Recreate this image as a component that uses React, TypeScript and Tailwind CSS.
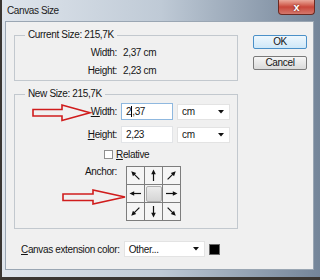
import React from "react";

function Arrow({ angle }: { angle: number }) {
  return (
    <svg width="13" height="13" viewBox="-6.5 -6.5 13 13">
      <g transform={`rotate(${angle})`}>
        <line x1="0" y1="5.5" x2="0" y2="-2" stroke="#111" strokeWidth="1.2" />
        <polygon points="0,-6 -2.3,-1.3 2.3,-1.3" fill="#111" />
      </g>
    </svg>
  );
}

function Combo({ text, w }: { text: string; w: string }) {
  return (
    <div className={`${w} h-[16px] bg-white border border-[#e3e3e3] flex items-center justify-between pl-[4px] pr-[5px]`}>
      <span>{text}</span>
      <svg width="6" height="4" viewBox="0 0 6 4">
        <polygon points="0,0 6,0 3,3.5" fill="#111" />
      </svg>
    </div>
  );
}

export default function App() {
  const angles: (number | null)[] = [315, 0, 45, 270, null, 90, 225, 180, 135];
  return (
    <div className="relative w-[320px] h-[280px] overflow-hidden bg-[#3a3632] flex font-['Liberation_Sans',Arial,sans-serif] text-[10px] tracking-[-0.35px] text-[#151515]">
      <div className="ml-[2px] mb-[3px] flex-1 flex flex-col bg-gradient-to-r from-[#dfe5ec] via-[#bfcad6] to-[#748599] pl-[3px] pr-[6px] pb-[7px]">
        {/* title bar */}
        <div className="h-[21px] flex items-start justify-between">
          <span className="pl-[2px] pt-[5px] text-[10px] leading-[11px] tracking-[-0.4px] text-[#1c1c1c]">Canvas Size</span>
          <div className="mr-[-1px] w-[37px] h-[15px] rounded-b-[4px] border border-t-0 border-[#6b2a22] bg-gradient-to-b from-[#e9a99c] via-[#c8463a] to-[#d4776c] flex items-center justify-center">
            <span className="text-white font-bold text-[11px] leading-[11px] tracking-normal [text-shadow:0_0_2px_#5a1810]">x</span>
          </div>
        </div>
        {/* content */}
        <div className="flex-1 bg-[#f0f0f0] border border-[#9aa6b3] flex flex-col">
          <div className="flex pl-[8px] pt-[7px]">
            <div className="flex flex-col w-[224px]">
              <fieldset className="border border-[#c2c8ce] pb-[0px]">
                <legend className="ml-[10px] px-[3px] leading-[12px]">Current Size: 215,7K</legend>
                <div className="pt-[3px] grid grid-cols-[102px_1fr] gap-x-[6px]">
                  <span className="h-[18px] leading-[18px] text-right">Width:</span>
                  <span className="h-[18px] leading-[18px]">2,37 cm</span>
                  <span className="h-[18px] leading-[18px] text-right">Height:</span>
                  <span className="h-[18px] leading-[18px]">2,23 cm</span>
                </div>
              </fieldset>
              <fieldset className="mt-[7px] border border-[#c2c8ce] pb-[7px]">
                <legend className="ml-[10px] px-[3px] leading-[12px]">New Size: 215,7K</legend>
                <div className="pt-[3px] flex flex-col">
                  <div className="flex items-center h-[17px]">
                    <span className="w-[102px] text-right"><span className="underline">W</span>idth:</span>
                    <div className="ml-[4px] w-[52px] h-[17px] bg-white border border-[#8fb8df] flex items-center pl-[4px]">
                      <span>2</span>
                      <span className="inline-block w-px h-[11px] bg-black" />
                      <span>,37</span>
                    </div>
                    <div className="ml-[4px]"><Combo text="cm" w="w-[53px]" /></div>
                  </div>
                  <div className="flex items-center h-[17px] mt-[6px]">
                    <span className="w-[102px] text-right"><span className="underline">H</span>eight:</span>
                    <div className="ml-[4px] w-[52px] h-[17px] bg-white border border-[#e2e4e7] flex items-center pl-[4px]">
                      <span>2,23</span>
                    </div>
                    <div className="ml-[4px]"><Combo text="cm" w="w-[53px]" /></div>
                  </div>
                  <div className="flex items-center h-[12px] mt-[5px] ml-[89px]">
                    <span className="w-[9px] h-[9px] bg-white border border-[#8f8f8f]" />
                    <span className="ml-[3px]"><span className="underline">R</span>elative</span>
                  </div>
                  <div className="flex items-start mt-[6px]">
                    <span className="w-[102px] text-right leading-[12px] pt-[0px]">Anchor:</span>
                    <div className="ml-[9px] grid grid-cols-3 gap-px bg-[#7d7d7d] p-px">
                      {angles.map((a, i) => (
                        <div key={i} className="w-[17px] h-[17px] bg-[#f5f5f5] flex items-center justify-center">
                          {a === null ? (
                            <div className="w-[16px] h-[16px] rounded-[2px] border border-[#b0b0b0] bg-gradient-to-b from-[#ececec] to-[#d5d5d5]" />
                          ) : (
                            <Arrow angle={a} />
                          )}
                        </div>
                      ))}
                    </div>
                  </div>
                </div>
              </fieldset>
            </div>
            <div className="ml-[15px] pt-[6px] flex flex-col gap-[7px]">
              <div className="w-[54px] h-[14px] rounded-[2px] border border-[#4a90c8] bg-gradient-to-b from-[#eef7fd] to-[#cfe8f8] flex items-center justify-center leading-[12px]">OK</div>
              <div className="w-[54px] h-[14px] rounded-[2px] border border-[#7a7a7a] bg-gradient-to-b from-[#f6f6f6] to-[#dadada] flex items-center justify-center leading-[12px]">Cancel</div>
            </div>
          </div>
          <div className="mt-[12px] flex items-center pl-[15px]">
            <span><span className="underline">C</span>anvas extension color:</span>
            <div className="ml-[4px]"><Combo text="Other..." w="w-[81px]" /></div>
            <span className="ml-[4px] w-[11px] h-[11px] bg-black border border-[#6a6a6a]" />
          </div>
        </div>
      </div>
      <svg className="absolute inset-0 pointer-events-none" width="320" height="280" viewBox="0 0 320 280">
        <polygon points="33,109.5 62,109.5 62,105 90,112.7 62,120.5 62,116 33,116" fill="none" stroke="#d01c1c" strokeWidth="1.6" strokeLinejoin="miter" />
        <polygon points="63,194 93,194 93,190 125,197 93,204 93,200.5 63,200.5" fill="none" stroke="#d01c1c" strokeWidth="1.6" strokeLinejoin="miter" />
      </svg>
    </div>
  );
}
